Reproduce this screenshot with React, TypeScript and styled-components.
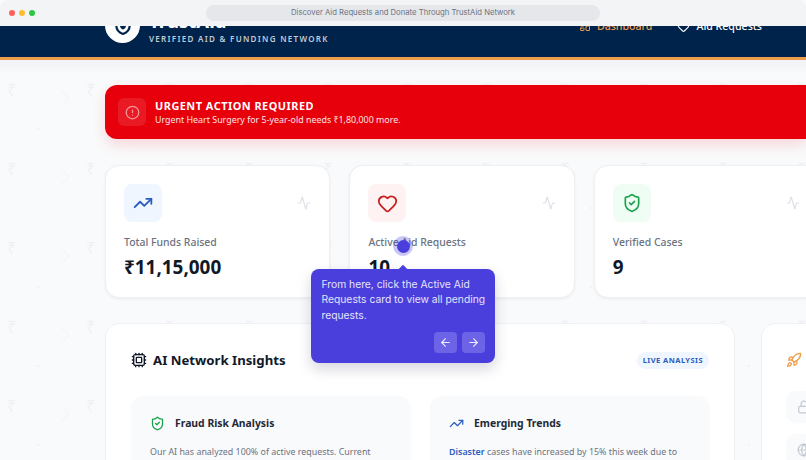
import React from "react";
import styled, { createGlobalStyle } from "styled-components";
import { Activity, ArrowLeft, ArrowRight, CircleAlert, Cpu, Globe, Heart, LayoutDashboard, Lock, Rocket, ShieldCheck, TrendingUp } from "lucide-react";

const patternSvg = `<svg xmlns='http://www.w3.org/2000/svg' width='79' height='79'><text x='7' y='36' font-family='Liberation Sans' font-size='17' fill='#f0f1f4'>₹</text><path d='M62 31l7 7-7 7' fill='none' stroke='#f1f2f5' stroke-width='1'/><circle cx='38' cy='69' r='1.1' fill='#eff0f3'/></svg>`;

const Global = createGlobalStyle`
  html, body { margin: 0; padding: 0; background: #fff; }
  body { font-family: "Noto Sans", Inter, sans-serif; }
  * { box-sizing: border-box; }
`;
const Frame = styled.div`
  width: 806px; height: 460px; overflow: hidden; display: flex; flex-direction: column; position: relative;
  background: #f9fafb;
`;
const Chrome = styled.div`
  height: 26px; flex: none; background: #f3f4f6; display: flex; align-items: center; padding-left: 9px;
  border-radius: 8px 8px 0 0; position: relative; z-index: 3;
`;
const Lights = styled.div`display: flex; gap: 4px; width: 197px; flex: none;`;
const Light = styled.span<{ $c: string }>`
  width: 6px; height: 6px; border-radius: 50%; background: ${p => p.$c};
`;
const Address = styled.div`
  width: 394px; height: 16px; border-radius: 8px; background: #e5e7eb; color: #6b7280; font-family: Inter, sans-serif; font-size: 7.7px;
  display: flex; align-items: center; justify-content: center; margin-top: -1px;
`;
const Page = styled.div`
  flex: 1; min-height: 0; overflow: hidden; background-color: #f9fafb;
  background-image: url("data:image/svg+xml,${encodeURIComponent(patternSvg)}");
  background-position: 0 34px;
`;
const Header = styled.header`
  height: 34px; background: #00234b; border-bottom: 3px solid #ee9d4c; display: flex; justify-content: space-between;
  padding: 0 0 0 105px; overflow: hidden;
`;
const HeaderShade = styled.div`height: 14px; margin-bottom: -14px; background: linear-gradient(#f1f2f5, rgba(249,250,251,0));`;
const Brand = styled.div`display: flex; gap: 9px; margin-top: -18px; height: 46px;`;
const LogoDisc = styled.div`
  width: 35px; height: 35px; border-radius: 50%; background: #fff; display: flex; align-items: center; justify-content: center; color: #00234b; flex: none;
`;
const BrandText = styled.div`display: flex; flex-direction: column; margin-top: 1px;`;
const BrandName = styled.div`color: #fff; font-weight: 700; font-size: 18.5px; line-height: 23px; height: 23px;`;
const BrandSub = styled.div`color: #c3cbd6; font-weight: 600; font-size: 8px; letter-spacing: 1.3px; line-height: 10px; margin-top: 2px; white-space: nowrap;`;
const Nav = styled.nav`display: flex; gap: 25px; margin-top: -8px; padding-right: 44px; height: 16px;`;
const NavItem = styled.div<{ $active?: boolean }>`
  display: flex; align-items: center; gap: 6px; font-size: 10.6px; font-weight: 500; color: ${p => (p.$active ? "#ee9d4c" : "#fff")}; white-space: nowrap;
`;
const Content = styled.main`padding: 25px 0 0 105px; width: 920px;`;
const Alert = styled.section`
  height: 54px; border-radius: 12px 0 0 12px; background: #e7000b; display: flex; align-items: center; gap: 9px; padding-left: 13px; width: 701px;
  box-shadow: 0 6px 14px rgba(231,0,11,.14); color: #fff;
`;
const AlertIcon = styled.div`
  width: 28px; height: 28px; border-radius: 6px; background: rgba(255,255,255,.1); display: flex; align-items: center; justify-content: center; color: rgba(255,255,255,.55);
`;
const AlertBody = styled.div`padding-top: 2px;`;
const AlertTitle = styled.div`font-size: 10.9px; font-weight: 700; letter-spacing: .5px; line-height: 14px;`;
const AlertText = styled.div`font-size: 8.9px; line-height: 14px; color: #fde3e4; white-space: nowrap;`;
const Stats = styled.section`display: flex; gap: 19.2px; margin-top: 26px;`;
const Stat = styled.article`
  width: 225.2px; height: 133px; flex: none; background: #fff; border: 1px solid #eef0f3; border-radius: 14px; padding: 18px 18px 0;
  box-shadow: 0 1px 3px rgba(0,0,0,.06);
`;
const StatTop = styled.div`display: flex; justify-content: space-between; align-items: center; color: #dde1e6;`;
const IconTile = styled.div<{ $bg: string; $fg: string }>`
  width: 38px; height: 38px; border-radius: 8px; background: ${p => p.$bg}; color: ${p => p.$fg}; display: flex; align-items: center; justify-content: center;
`;
const StatLabel = styled.div`font-size: 10.45px; font-weight: 500; color: #6b7280; margin-top: 12px; line-height: 16px;`;
const StatValue = styled.div`font-size: 18.9px; font-weight: 700; color: #111827; margin-top: 4px; line-height: 26px;`;
const Lower = styled.section`display: flex; gap: 26px; margin-top: 25px; align-items: flex-start;`;
const Panel = styled.article`
  width: 630px; height: 300px; flex: none; background: #fff; border: 1px solid #f0f1f4; border-radius: 14px; padding: 25px 25px;
`;
const PanelHead = styled.div`display: flex; justify-content: space-between; align-items: center; height: 22px;`;
const PanelTitle = styled.h2`display: flex; align-items: center; gap: 6px; margin: 0; font-size: 13.2px; font-weight: 700; color: #111827;`;
const Badge = styled.span`
  background: #eff6ff; color: #2b5cc0; font-size: 7.5px; font-weight: 700; letter-spacing: .45px; border-radius: 9px; height: 17px; padding: 0 6px; display: flex; align-items: center;
`;
const InsightGrid = styled.div`display: grid; grid-template-columns: 280px 280px; gap: 19px; margin-top: 25px;`;
const Insight = styled.div`background: #f9fafb; border-radius: 12px; padding: 19px 19px;`;
const InsightHead = styled.h3`display: flex; align-items: center; gap: 10px; margin: 0; font-size: 10.4px; font-weight: 700; color: #1f2937; line-height: 16px;`;
const InsightText = styled.p`margin: 13px 0 0; font-size: 8.9px; line-height: 15px; color: #6b7280; white-space: nowrap;`;
const Strong = styled.b`color: #2b5cc0; font-weight: 600;`;
const Side = styled.article`
  width: 240px; height: 300px; flex: none; background: #fff; border: 1px solid #f0f1f4; border-radius: 14px; padding: 27px 25px 0 24px; display: flex; flex-direction: column;
`;
const RocketWrap = styled.div`color: #ee9d4c; height: 19px;`;
const SideList = styled.div`display: flex; flex-direction: column; gap: 11px; margin-top: 21px;`;
const SideRow = styled.div`
  width: 180px; height: 32px; border-radius: 10px; background: #f9fafb; display: flex; align-items: center; padding-left: 11px; color: #c3c9d2;
`;
const Spot = styled.div`
  position: absolute; left: 393px; top: 236px; width: 20px; height: 20px; border-radius: 50%; background: rgba(79,70,229,.3); display: flex; align-items: center; justify-content: center; z-index: 4;
`;
const SpotCore = styled.div`width: 13px; height: 13px; border-radius: 50%; background: #4a3fdc;`;
const Tip = styled.aside`
  position: absolute; left: 311px; top: 269px; width: 184px; height: 94px; background: #4a3fdc; border-radius: 8px; padding: 8px 6px 0 10.5px; color: #e4e2fb; z-index: 4;
  font-family: Inter, sans-serif; font-size: 10.3px; line-height: 15.4px; box-shadow: 0 6px 14px rgba(30,30,80,.18);
  &::before { content: ""; position: absolute; left: 89px; top: -3px; width: 6px; height: 6px; background: #4a3fdc; transform: rotate(45deg); }
`;
const TipNav = styled.div`position: absolute; right: 10px; bottom: 10px; display: flex; gap: 5px;`;
const TipBtn = styled.button`
  width: 23px; height: 21px; padding: 0; border: 0; border-radius: 4px; background: #6c63e6; color: #eeedfd; display: flex; align-items: center; justify-content: center;
`;
const ShieldLogo = () => (
  <svg width="20" height="20" viewBox="0 0 24 24" fill="none" stroke="#00234b" strokeWidth="2.6" strokeLinejoin="round">
    <path d="M12 2.5l8 3v6c0 5-3.4 8.4-8 10-4.600-1.600-8-5-8-10v-6z" />
    <path d="M12 8l3.500 1.300v2.700c0 2-1.500 3.500-3.500 4.300-2-.8-3.500-2.300-3.500-4.300V9.300z" fill="#00234b" stroke="none" />
  </svg>
);

export default function App() {
  return (
    <Frame>
      <Global />
      <Chrome>
        <Lights>
          <Light $c="#ff5f57" />
          <Light $c="#febc2e" />
          <Light $c="#28c840" />
        </Lights>
        <Address>Discover Aid Requests and Donate Through TrustAid Network</Address>
      </Chrome>
      <Page>
        <Header>
          <Brand>
            <LogoDisc><ShieldLogo /></LogoDisc>
            <BrandText>
              <BrandName>TrustAid</BrandName>
              <BrandSub>VERIFIED AID &amp; FUNDING NETWORK</BrandSub>
            </BrandText>
          </Brand>
          <Nav>
            <NavItem $active><LayoutDashboard size={12} />Dashboard</NavItem>
            <NavItem><Heart size={13} />Aid Requests</NavItem>
          </Nav>
        </Header>
        <HeaderShade />
        <Content>
          <Alert>
            <AlertIcon><CircleAlert size={15} /></AlertIcon>
            <AlertBody>
              <AlertTitle>URGENT ACTION REQUIRED</AlertTitle>
              <AlertText>Urgent Heart Surgery for 5-year-old needs ₹1,80,000 more.</AlertText>
            </AlertBody>
          </Alert>
          <Stats>
            <Stat>
              <StatTop>
                <IconTile $bg="#eff6ff" $fg="#2b5cc0"><TrendingUp size={20} strokeWidth={2.2} /></IconTile>
                <Activity size={14} />
              </StatTop>
              <StatLabel>Total Funds Raised</StatLabel>
              <StatValue>₹11,15,000</StatValue>
            </Stat>
            <Stat>
              <StatTop>
                <IconTile $bg="#fef2f2" $fg="#c81e1e"><Heart size={21} strokeWidth={2} /></IconTile>
                <Activity size={14} />
              </StatTop>
              <StatLabel>Active Aid Requests</StatLabel>
              <StatValue>10</StatValue>
            </Stat>
            <Stat>
              <StatTop>
                <IconTile $bg="#f0fdf4" $fg="#16a34a"><ShieldCheck size={20} strokeWidth={2} /></IconTile>
                <Activity size={14} />
              </StatTop>
              <StatLabel>Verified Cases</StatLabel>
              <StatValue>9</StatValue>
            </Stat>
          </Stats>
          <Lower>
            <Panel>
              <PanelHead>
                <PanelTitle><Cpu size={16} />AI Network Insights</PanelTitle>
                <Badge>LIVE ANALYSIS</Badge>
              </PanelHead>
              <InsightGrid>
                <Insight>
                  <InsightHead><ShieldCheck size={15} color="#16a34a" />Fraud Risk Analysis</InsightHead>
                  <InsightText>Our AI has analyzed 100% of active requests. Current</InsightText>
                </Insight>
                <Insight>
                  <InsightHead><TrendingUp size={15} color="#2b5cc0" />Emerging Trends</InsightHead>
                  <InsightText><Strong>Disaster</Strong> cases have increased by 15% this week due to</InsightText>
                </Insight>
              </InsightGrid>
            </Panel>
            <Side>
              <RocketWrap><Rocket size={16} /></RocketWrap>
              <SideList>
                <SideRow><Lock size={14} /></SideRow>
                <SideRow><Globe size={14} /></SideRow>
              </SideList>
            </Side>
          </Lower>
        </Content>
      </Page>
      <Spot><SpotCore /></Spot>
      <Tip>
        From here, click the Active Aid Requests card to view all pending requests.
        <TipNav>
          <TipBtn aria-label="Back"><ArrowLeft size={13} /></TipBtn>
          <TipBtn aria-label="Next"><ArrowRight size={13} /></TipBtn>
        </TipNav>
      </Tip>
    </Frame>
  );
}
